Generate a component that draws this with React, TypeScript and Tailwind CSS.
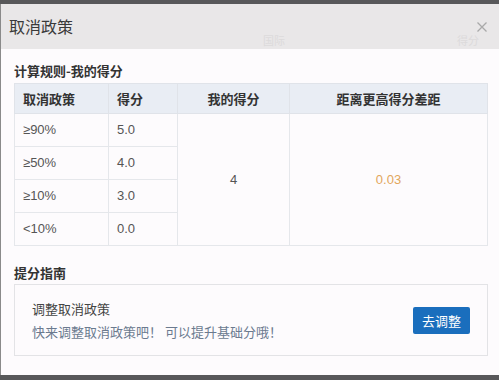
import React from 'react';

const rules = [
  { policy: '≥90%', score: '5.0' },
  { policy: '≥50%', score: '4.0' },
  { policy: '≥10%', score: '3.0' },
  { policy: '<10%', score: '0.0' },
];

const CancelPolicyDialog: React.FC = () => {
  return (
    <div className="w-[499px] h-[380px] flex flex-col bg-[#58585a] overflow-hidden font-['Noto_Sans_CJK_SC','Noto_Sans',sans-serif]">
      <div className="h-[4px] shrink-0" />
      <div className="flex-1 flex flex-col border-l border-[#8a8a8a]">
        <header className="relative h-[45px] shrink-0 bg-[#e9e7e8] flex items-center pl-[8px]">
          <h1 className="text-[16px] leading-[20px] text-[#3a3a3a] pb-[2px]">取消政策</h1>
          <span className="absolute left-[262px] top-[28px] text-[11px] text-[#dcdadb]">国际</span>
          <span className="absolute left-[456px] top-[28px] text-[11px] text-[#dcdadb]">得分</span>
          <button className="absolute right-[11px] top-[17px] text-[#a9a9a9]">
            <svg width="12" height="12" viewBox="0 0 12 12" fill="none" stroke="currentColor" strokeWidth="1.3">
              <path d="M1.5 1.5l9 9M10.5 1.5l-9 9" />
            </svg>
          </button>
        </header>

        <main className="flex-1 bg-[#fdfbfd] pl-[13px] pr-[11px] pt-[13px]">
          <h2 className="text-[13px] leading-[18px] font-bold text-[#333] mb-[3px]">计算规则-我的得分</h2>
          <table className="w-[474px] border-collapse text-[13px] text-[#555] table-fixed">
            <colgroup>
              <col className="w-[94px]" />
              <col className="w-[69px]" />
              <col className="w-[112px]" />
              <col />
            </colgroup>
            <thead>
              <tr className="h-[30px] bg-[#e9edf4] text-[#333]">
                <th className="border border-[#e0e3e9] text-left font-bold pl-[8px]">取消政策</th>
                <th className="border border-[#e0e3e9] text-left font-bold pl-[8px]">得分</th>
                <th className="border border-[#e0e3e9] text-center font-bold">我的得分</th>
                <th className="border border-[#e0e3e9] text-center font-bold">距离更高得分差距</th>
              </tr>
            </thead>
            <tbody className="font-['Liberation_Sans','Noto_Sans_CJK_SC',sans-serif]">
              {rules.map((r, i) => (
                <tr key={r.policy} className="h-[33px]">
                  <td className="border border-[#e5e7eb] pl-[8px]">{r.policy}</td>
                  <td className="border border-[#e5e7eb] pl-[8px]">{r.score}</td>
                  {i === 0 && (
                    <>
                      <td rowSpan={4} className="border border-[#e5e7eb] text-center">4</td>
                      <td rowSpan={4} className="border border-[#e5e7eb] text-center text-[#e2a65c]">0.03</td>
                    </>
                  )}
                </tr>
              ))}
            </tbody>
          </table>

          <h2 className="text-[13px] leading-[18px] font-bold text-[#333] mt-[18px] mb-[2px]">提分指南</h2>
          <div className="w-[474px] h-[72px] border border-[#e3e3e6] flex items-center justify-between pl-[17px] pr-[17px]">
            <div className="flex flex-col gap-[3px]">
              <div className="text-[13px] leading-[20px] text-[#444]">调整取消政策</div>
              <div className="text-[13px] leading-[20px] text-[#6b7a8f]">快来调整取消政策吧！ 可以提升基础分哦！</div>
            </div>
            <button className="w-[57px] h-[27px] bg-[#1a6ebd] text-white text-[13px] rounded-[2px] mt-[1px]">去调整</button>
          </div>
        </main>
      </div>
      <div className="h-[5px] shrink-0" />
    </div>
  );
};

export default function App() {
  return <CancelPolicyDialog />;
}
